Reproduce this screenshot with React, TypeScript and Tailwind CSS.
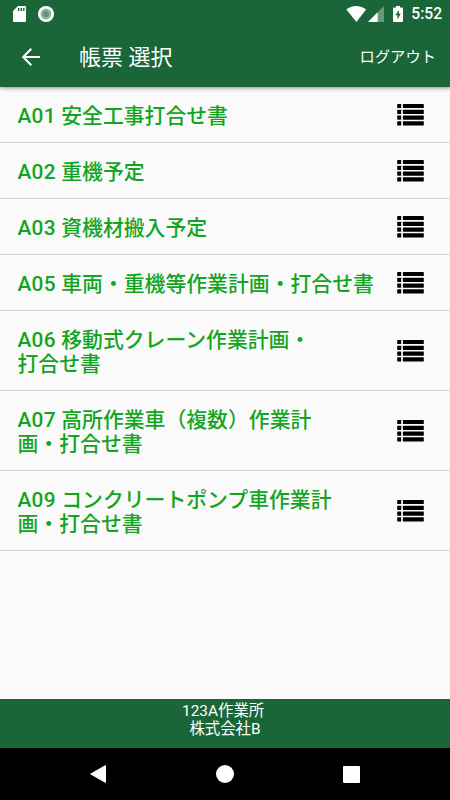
import { useState } from "react";

interface IReport {
  code: string;
  lines: string[];
}

const reports: IReport[] = [
  { code: "A01", lines: ["安全工事打合せ書"] },
  { code: "A02", lines: ["重機予定"] },
  { code: "A03", lines: ["資機材搬入予定"] },
  { code: "A05", lines: ["車両・重機等作業計画・打合せ書"] },
  { code: "A06", lines: ["移動式クレーン作業計画・", "打合せ書"] },
  { code: "A07", lines: ["高所作業車（複数）作業計", "画・打合せ書"] },
  { code: "A09", lines: ["コンクリートポンプ車作業計", "画・打合せ書"] },
];

const ListIcon = () => (
  <svg width="27" height="22" viewBox="0 0 27 22" className="shrink-0">
    {[0, 5.8, 11.6, 17.3].map((y) => (
      <g key={y}>
        <rect x="0.2" y={y} width="4" height="4.1" rx="0.4" />
        <rect x="5.9" y={y} width="20.9" height="4.1" rx="0.4" />
      </g>
    ))}
  </svg>
);

const StatusBar = () => (
  <div className="flex h-[27px] items-center justify-between pr-[9px] pl-[13px] text-white">
    <div className="flex items-center gap-3">
      <svg width="13" height="16" viewBox="0 0 13 16">
        <path
          d="M5 0H12Q13 0 13 1V15Q13 16 12 16H1Q0 16 0 15V5Z"
          fill="white"
        />
        <path d="M5 2H6.4V5H5ZM7.6 2H9V5H7.6ZM10.1 2H11.5V5H10.1Z" fill="#1b6638" />
      </svg>
      <svg width="16" height="16" viewBox="0 0 16 16">
        <circle cx="8" cy="8" r="8" fill="white" />
        <circle cx="8" cy="8" r="5.4" fill="#8db39c" />
        <circle cx="8" cy="8" r="3" fill="#5f9474" />
      </svg>
    </div>
    <div className="flex items-center">
      <svg width="20" height="16" viewBox="0 0 20 16">
        <path d="M0.4 3.6C5.5 -1.1 14.5 -1.1 20 3.6L10.4 16Z" fill="white" />
      </svg>
      <svg width="16" height="16" viewBox="0 0 16 16" className="ml-[2px]">
        <path d="M0 16L16 0V16Z" fill="#69987b" />
        <path d="M0 16L9.7 6.3V16Z" fill="white" />
      </svg>
      <svg width="10" height="16" viewBox="0 0 10 16" className="ml-[9px]">
        <path
          d="M3 0H7V1.5H9Q10 1.5 10 2.5V15Q10 16 9 16H1Q0 16 0 15V2.5Q0 1.5 1 1.5H3Z"
          fill="white"
        />
        <path d="M6 4L2.3 9.2H4.4V13.4L7.8 7.8H5.9Z" fill="#1b6638" />
      </svg>
      <span className="-mr-px ml-[8px] pt-px text-[15.6px] leading-5 font-medium">
        5:52
      </span>
    </div>
  </div>
);

const App = () => {
  const [selected, setSelected] = useState<string | null>(null);

  return (
    <div
      lang="ja"
      className="flex h-[800px] w-[450px] flex-col overflow-hidden bg-[#fafafa] font-[Roboto,'Noto_Sans_CJK_JP',sans-serif]"
    >
      <header className="relative h-[87px] shrink-0 bg-[#1b6638] text-white shadow-[0_1px_4px_rgba(0,0,0,0.45)]">
        <StatusBar />
        <div className="flex h-[60px] items-center pr-[14px] pl-[22px]">
          <button aria-label="戻る">
            <svg width="18" height="18" viewBox="0 0 18 18" fill="none">
              <path
                d="M18 9H1.5M9.3 0.8L1.2 9L9.3 17.2"
                stroke="white"
                strokeWidth="2"
              />
            </svg>
          </button>
          <h1 className="ml-[39px] pt-px text-[22px] leading-[30px]">帳票 選択</h1>
          <button className="ml-auto text-[15.3px] leading-5">ログアウト</button>
        </div>
      </header>

      <main className="flex-1">
        <ul>
          {reports.map((report) => (
            <li
              key={report.code}
              onClick={() => setSelected(report.code)}
              aria-current={selected === report.code}
              className="flex items-center justify-between border-b border-[#d6d6d6] pt-4 pr-[26px] pb-[15px] pl-[17.5px]"
            >
              <p className="relative top-px text-[20.85px] leading-6 font-medium whitespace-nowrap text-[#12a51f]">
                <span className="tracking-[0.25px]">{report.code} </span>
                {report.lines.map((line, i) => (
                  <span key={line} className={i > 0 ? "block" : ""}>
                    {line}
                  </span>
                ))}
              </p>
              <ListIcon />
            </li>
          ))}
        </ul>
      </main>

      <footer className="h-[49px] shrink-0 bg-[#1b6638] pt-[3px] text-center text-[15.4px] leading-[18px] text-white">
        <p>123A作業所&nbsp;</p>
        <p>株式会社B</p>
      </footer>

      <nav className="flex h-[52px] shrink-0 items-center justify-between bg-black pr-[90px] pl-[90px]">
        <svg width="16" height="18" viewBox="0 0 16 18">
          <path d="M0.7 9L15.5 0.6V17.4Z" fill="white" stroke="white" strokeLinejoin="round" />
        </svg>
        <div className="size-[18px] rounded-full bg-white" />
        <div className="size-[17px] rounded-[1px] bg-white" />
      </nav>
    </div>
  );
};

export default App;
